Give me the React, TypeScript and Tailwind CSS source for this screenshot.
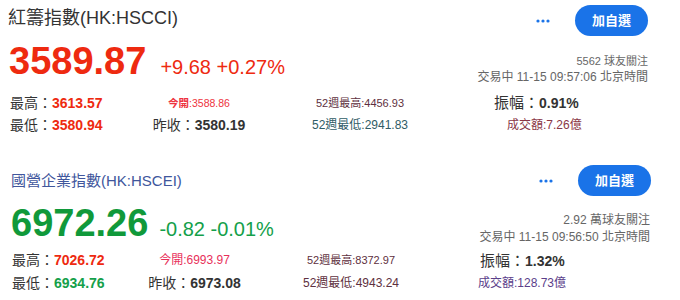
const font = { fontFamily: '"Liberation Sans", "Noto Sans CJK TC", sans-serif' };

const Dots = () => (
  <svg width="14" height="4" viewBox="0 0 14 4" className="text-[#1a73e8]">
    <circle cx="2" cy="2" r="1.6" fill="currentColor" />
    <circle cx="7" cy="2" r="1.6" fill="currentColor" />
    <circle cx="12" cy="2" r="1.6" fill="currentColor" />
  </svg>
);

const Actions = () => (
  <div className="flex items-center gap-[25px]">
    <Dots />
    <button className="w-[73px] h-[31px] rounded-full bg-[#1a73e8] text-white text-[13px] font-bold">
      加自選
    </button>
  </div>
);

export default function App() {
  return (
    <div className="w-[680px] h-[300px] bg-white overflow-hidden" style={font}>
      {/* 紅籌指數 */}
      <section>
        <div className="flex items-center justify-between pl-2 pr-[32px] pt-[5px] h-[36px]">
          <h1 className="text-[18px] leading-[24px] text-[#333] -mt-[5px]">紅籌指數(HK:HSCCI)</h1>
          <Actions />
        </div>
        <div className="flex justify-between items-start mt-[6px] pr-[32px]">
          <div className="flex items-baseline pl-[9px]">
            <span className="text-[38px] leading-[38px] font-bold text-[#ee2a10]">3589.87</span>
            <span className="ml-[14px] text-[20px] text-[#ee2a10]">+9.68 +0.27%</span>
          </div>
          <div className="pt-[11px] text-right text-[#666]">
            <div className="text-[11px] leading-[16px]">5562 球友關注</div>
            <div className="text-[12px] leading-[16px]">交易中 11-15 09:57:06 北京時間</div>
          </div>
        </div>
        <div className="mt-[7px] grid grid-cols-[150px_98px_224px_1fr] text-[#333]">
          <div className="pl-[10px] h-[22px] leading-[22px] text-[14px]">最高：<b className="text-[#ee2a10]">3613.57</b></div>
          <div className="h-[22px] leading-[22px] text-center text-[10.5px] font-bold text-[#ee3340]">今開<span className="font-normal">:3588.86</span></div>
          <div className="h-[22px] leading-[22px] text-center text-[11px] text-[#5e3040]">52週最高:4456.93</div>
          <div className="pl-[22px] h-[22px] leading-[22px] text-[15px]">振幅：<b className="text-[14px]">0.91%</b></div>
          <div className="pl-[10px] h-[22px] leading-[22px] text-[14px]">最低：<b className="text-[#ee2a10]">3580.94</b></div>
          <div className="h-[22px] leading-[22px] text-center text-[14px]">昨收：<b>3580.19</b></div>
          <div className="h-[22px] leading-[22px] text-center text-[12px] text-[#2f5c66]">52週最低:2941.83</div>
          <div className="pl-[35px] h-[22px] leading-[22px] text-[12px] text-[#8a3646]">成交額:7.26億</div>
        </div>
      </section>

      {/* 國營企業指數 */}
      <section className="mt-[29px]">
        <div className="flex items-center justify-between pl-[11px] pr-[29px] h-[31px]">
          <h1 className="text-[15px] leading-[22px] text-[#40569c]">國營企業指數(HK:HSCEI)</h1>
          <Actions />
        </div>
        <div className="flex justify-between items-start mt-[8px] pr-[30px]">
          <div className="flex items-baseline pl-[11px]">
            <span className="text-[38px] leading-[38px] font-bold text-[#10993a]">6972.26</span>
            <span className="ml-[11px] text-[20px] text-[#14a04a]">-0.82 -0.01%</span>
          </div>
          <div className="pt-[8px] text-right text-[#666]">
            <div className="text-[12px] leading-[17px]">2.92 萬球友關注</div>
            <div className="text-[12px] leading-[17px]">交易中 11-15 09:56:50 北京時間</div>
          </div>
        </div>
        <div className="mt-[3px] grid grid-cols-[140px_109px_204px_1fr] text-[#333]">
          <div className="pl-[12px] h-[23px] leading-[23px] text-[14px]">最高：<b className="text-[#ee2a10]">7026.72</b></div>
          <div className="h-[23px] leading-[23px] text-center text-[12px] text-[#e8305a]">今開:6993.97</div>
          <div className="h-[23px] leading-[23px] text-center text-[11px] text-[#5e3040]">52週最高:8372.97</div>
          <div className="pl-[27px] h-[23px] leading-[23px] text-[15px]">振幅：<b className="text-[14px]">1.32%</b></div>
          <div className="pl-[12px] h-[23px] leading-[23px] text-[14px]">最低：<b className="text-[#14a04a]">6934.76</b></div>
          <div className="h-[23px] leading-[23px] text-center text-[14px]">昨收：<b>6973.08</b></div>
          <div className="h-[23px] leading-[23px] text-center text-[12px] text-[#5e3040]">52週最低:4943.24</div>
          <div className="pl-[25px] h-[23px] leading-[23px] text-[12px] text-[#5b3e8a]">成交額:128.73億</div>
        </div>
      </section>
    </div>
  );
}
